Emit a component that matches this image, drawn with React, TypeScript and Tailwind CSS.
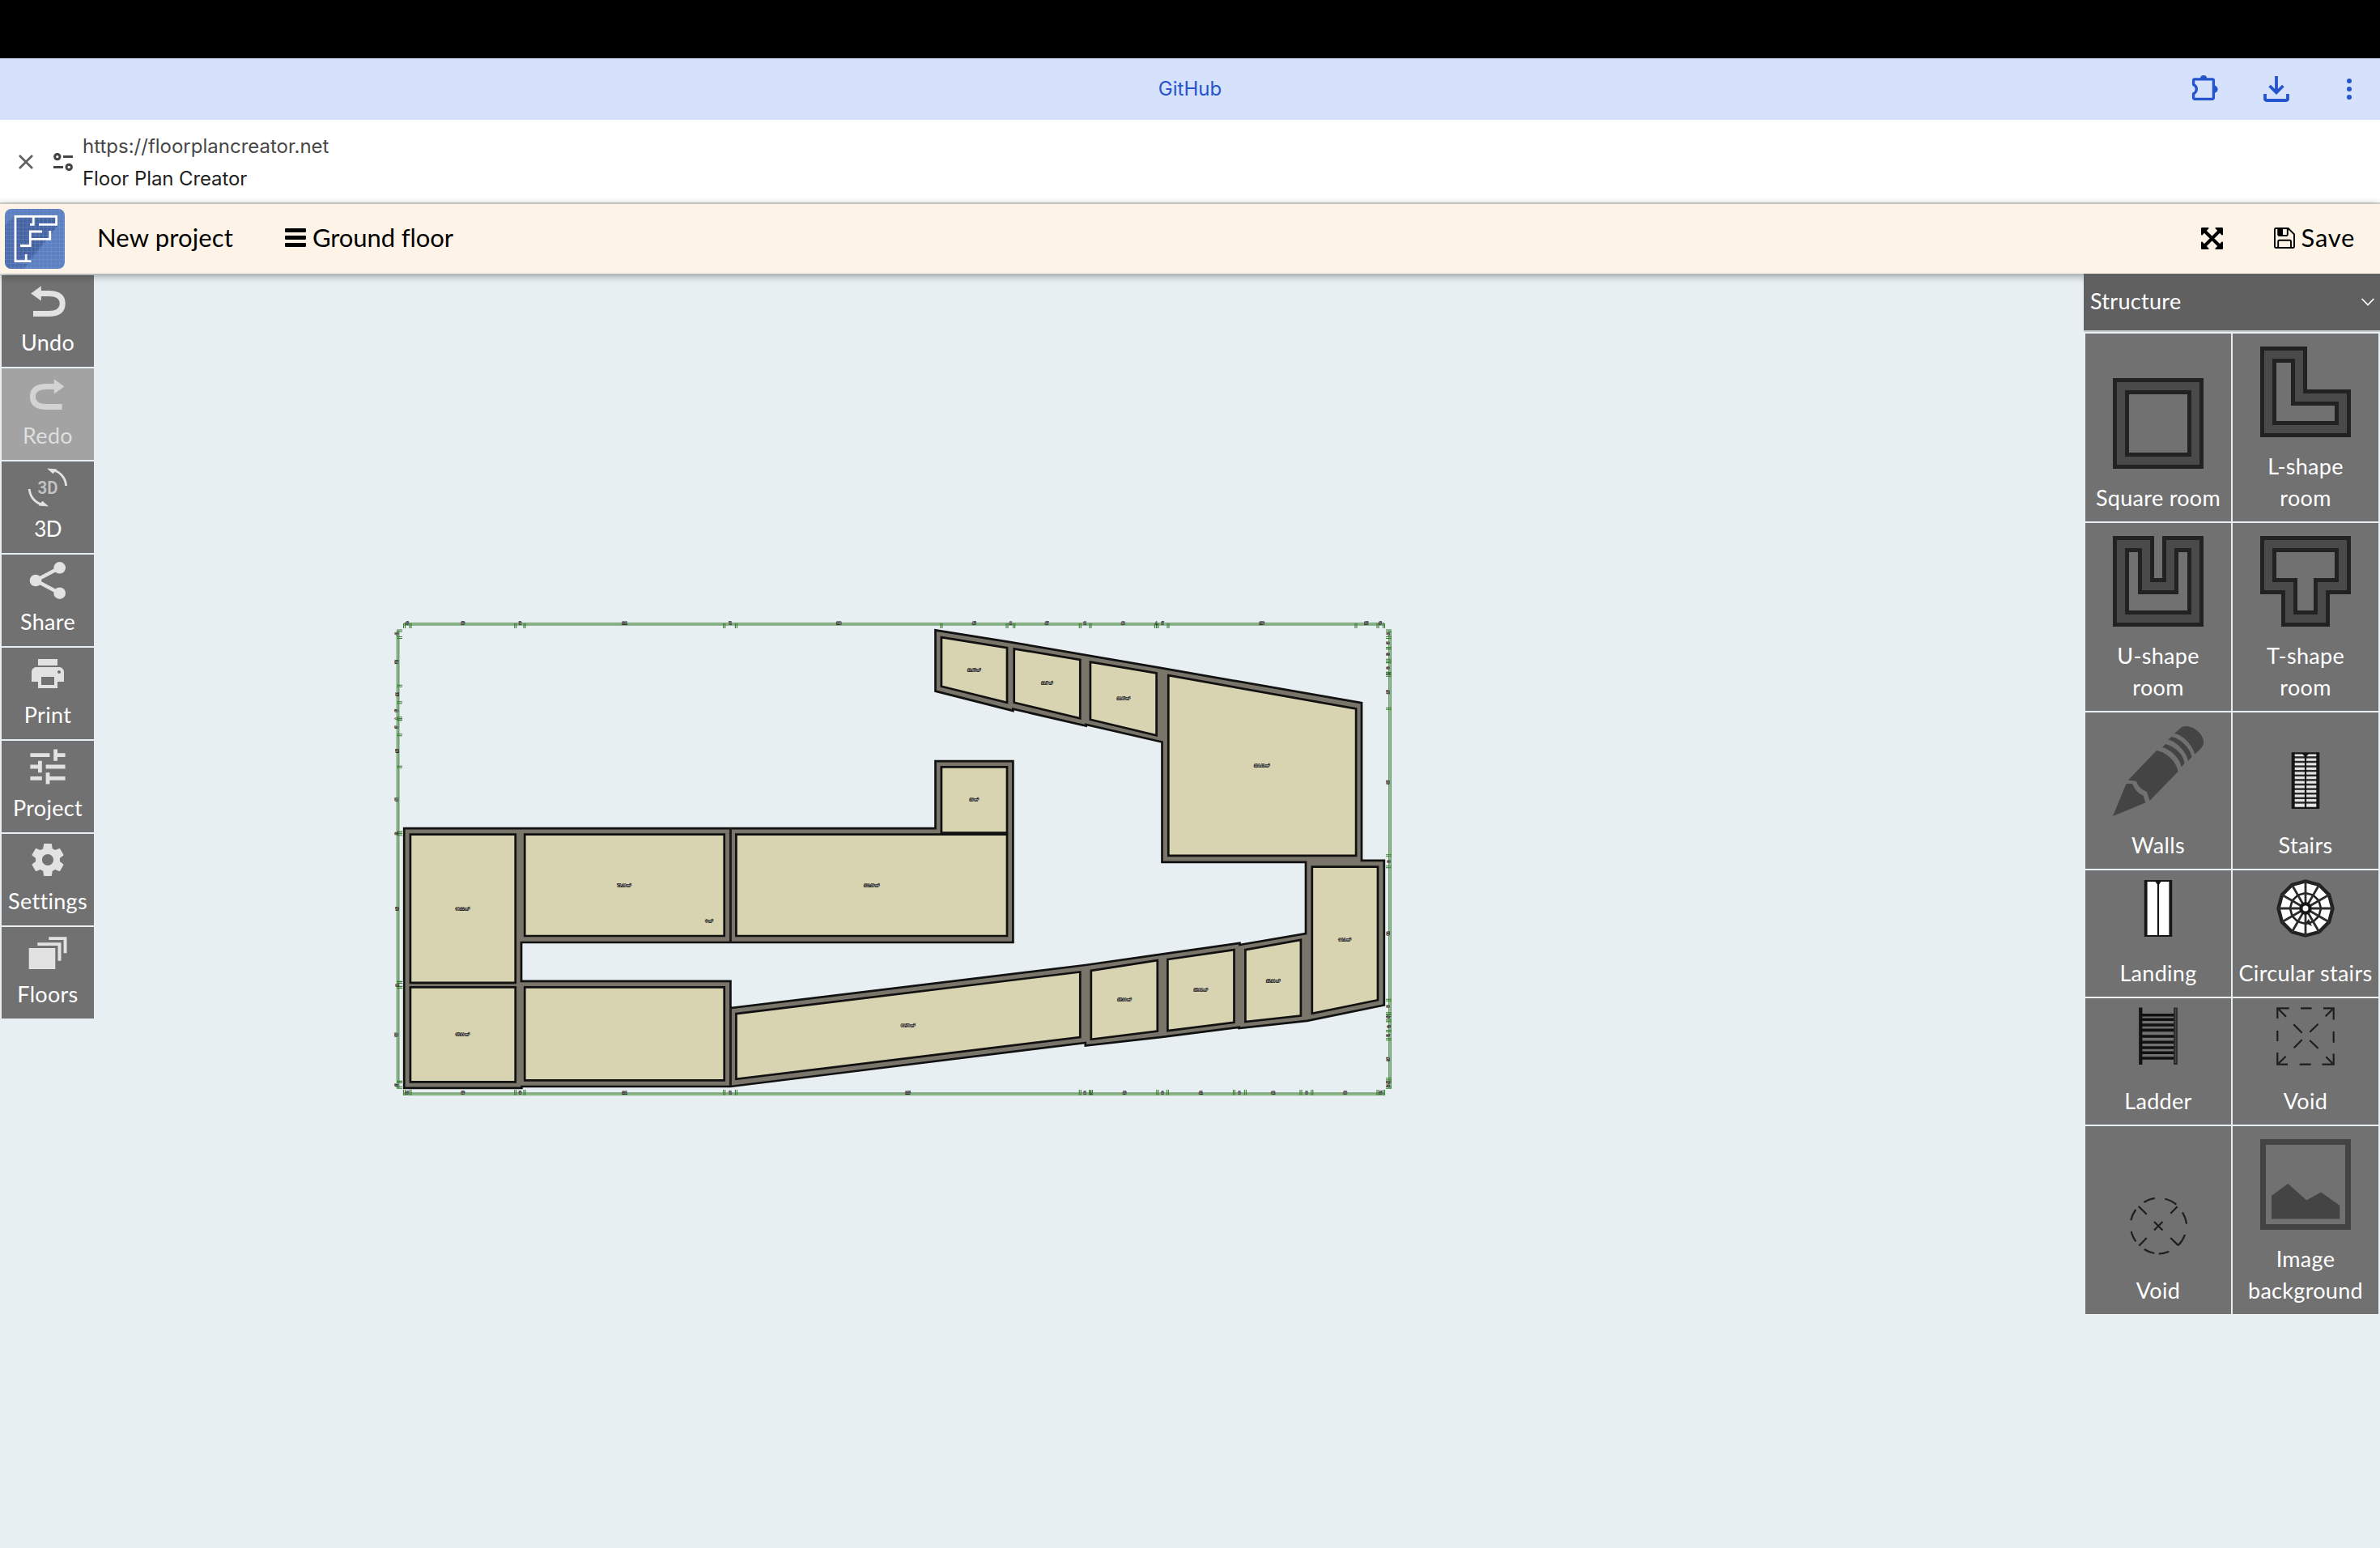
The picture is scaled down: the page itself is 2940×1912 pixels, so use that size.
import React from "react";

const OUTLINE =
  "M499.2 1023.2H1155.5V940.2H1251.4V1164H644V1211.8H902.4V1245L1340.8 1192L1434.7 1178.6L1531.4 1164.8V1167L1613 1153V1064.8H1435.5V916.5L1341.6 895V896.6L1251.4 875.7V877.9L1155.5 853.6V778.4L1245 792.6L1434.7 825.2L1682 868.2V1062.8H1709.8V1241.5L1614.7 1260.9L1530.6 1270V1268.8L1435.5 1280.8L1340.8 1291.6V1288L902.4 1342H644.5V1343.9H499.2Z";

const ROOMS: string[] = [
  "M506.9 1030.7H636.7V1213.8H506.9Z",
  "M506.9 1219.4H636.7V1336.4H506.9Z",
  "M648.2 1030.7H894.7V1156H648.2Z",
  "M648.2 1219.4H894.7V1334.4H648.2Z",
  "M909.4 1030.7H1244V1156H909.4Z",
  "M1162.9 947.3H1244V1028.8H1162.9Z",
  "M1162.9 787.2L1244 800.2V867.8L1162.9 847.7Z",
  "M1252.7 801.4L1334.3 814.8V887.2L1252.7 867.8Z",
  "M1346.9 817.6L1428.6 831.5V908.2L1346.9 888.8Z",
  "M1443.3 834.2L1675.1 875.3V1056.8H1443.3Z",
  "M1620.8 1070.7H1702V1235.2L1620.8 1251.8Z",
  "M909.4 1252.2L1334.3 1200.4V1281L909.4 1332.8Z",
  "M1347.8 1198.8L1429.8 1186.1V1273.5L1347.8 1283.8Z",
  "M1442.4 1185L1524.5 1173.1V1262.8L1442.4 1273.1Z",
  "M1538.4 1173.1L1606.9 1160.8V1254.5L1538.4 1262Z",
];

const AREAS: [number, number, string, number][] = [
  [571.4, 1122.5, "38.22 m²", 17],
  [571.4, 1277.5, "37.33 m²", 17],
  [771, 1093.2, "71.28 m²", 17],
  [876, 1137.5, "0 m²", 9],
  [1076.7, 1093.2, "102.16 m²", 19],
  [1121.6, 1266.4, "83.78 m²", 17],
  [1203.3, 827.5, "12.65 m²", 16],
  [1293.5, 843.7, "13.7 m²", 14],
  [1387.8, 862.3, "14.85 m²", 16],
  [1558.8, 945.3, "114.41 m²", 19],
  [1203.3, 987.2, "16 m²", 11],
  [1661.2, 1160.4, "34.1 m²", 15],
  [1389, 1234.4, "17.33 m²", 17],
  [1483.3, 1222.5, "17.81 m²", 17],
  [1572.7, 1211, "15.14 m²", 17],
];

const TOP_TICKS = [499.5, 507, 636.7, 648, 894.7, 909.4, 1162.9, 1244, 1252.7, 1334.3, 1347, 1427.4, 1430, 1443, 1675, 1702, 1709.5];
const TOP_LABELS: [number, string][] = [[502.9, "35"], [571.8, "650"], [642.4, "56"], [771.4, "1231"], [902, "74"], [1036.3, "1268"], [1203.3, "405"], [1248.2, "44"], [1293, "407"], [1340, "64"], [1387.3, "408"], [1428.6, "1"], [1436, "67"], [1558.8, "1160"], [1687.8, "135"], [1705, "35"]];
const BOTTOM_TICKS = [499.5, 507, 636.7, 648, 894.7, 909.4, 1334.3, 1346.5, 1348.5, 1429.8, 1442.4, 1524.5, 1538.4, 1607, 1620.8, 1702, 1709.5];
const BOTTOM_LABELS: [number, string][] = [[502.9, "35"], [571.8, "650"], [642.4, "56"], [771.4, "1231"], [902, "74"], [1121.6, "2125"], [1340, "64"], [1347.5, "1"], [1389, "410"], [1436, "63"], [1483.3, "411"], [1531, "69"], [1572.7, "342"], [1614, "69"], [1661.5, "406"], [1705.5, "35"]];
const LEFT_TICKS = [779, 787.5, 847.3, 867.8, 886.8, 888.6, 907.8, 947.3, 1028.4, 1030.8, 1213.4, 1219.4, 1336.4, 1343.2];
const LEFT_LABELS: [number, string][] = [[782.8, "44"], [817.6, "302"], [857.5, "101"], [877.7, "95"], [887.6, "8"], [898.3, "95"], [927.5, "197"], [987.6, "408"], [1029.6, "12"], [1122.5, "915"], [1217, "28"], [1277.9, "585"], [1340.3, "37"]];
const RIGHT_TICKS = [779, 787.5, 800.6, 815.2, 817.6, 831.4, 834.2, 875.3, 1056.8, 1070.7, 1235.2, 1251.8, 1254.5, 1260.9, 1273.5, 1283.8, 1332.8, 1336.4, 1343.2];
const RIGHT_LABELS: [number, string][] = [[782.8, "44"], [794.3, "65"], [808.1, "73"], [825.1, "69"], [832.2, "1"], [854.8, "205"], [966.3, "907"], [1064, "69"], [1152.9, "822"], [1243.1, "83"], [1256.1, "13"], [1268, "62"], [1278.7, "51"], [1308.3, "245"], [1336.8, "18"], [1341.1, "34"]];

function Tiny({ x, y, text, w, rotate }: { x: number; y: number; text: string; w: number; rotate?: boolean }) {
  return (
    <text
      x={x}
      y={y + 1.5}
      transform={rotate ? `rotate(-90 ${x} ${y})` : undefined}
      textAnchor="middle"
      textLength={w}
      lengthAdjust="spacingAndGlyphs"
      fontSize="4.3"
      fontFamily="Liberation Sans, sans-serif"
      fill="#fff"
      stroke="#111"
      strokeWidth="1.4"
      paintOrder="stroke"
    >
      {text}
    </text>
  );
}

function FloorPlan() {
  return (
    <svg className="absolute top-[412px] left-[480px]" width="1260" height="620" viewBox="480 750 1260 620">
      <path d="M499 770.8H1710M499 1351H1710M491.5 779V1344M1717 779V1344" fill="none" stroke="#c3dcbf" strokeWidth="2" />
      <g stroke="#3c7d34" strokeWidth="1.1" fill="none">
        <path d="M499 769.8H1710M499 772H1710M499 1350H1710M499 1352.3H1710M490.4 779V1344M492.8 779V1344M1715.8 779V1344M1718.2 779V1344" />
        {TOP_TICKS.map((x) => <path key={x} d={`M${x - 1} 770V776M${x + 1} 770V776`} />)}
        {BOTTOM_TICKS.map((x) => <path key={x} d={`M${x - 1} 1346V1353M${x + 1} 1346V1353`} />)}
        {LEFT_TICKS.map((y) => <path key={y} d={`M490 ${y - 1}H497M490 ${y + 1}H497`} />)}
        {RIGHT_TICKS.map((y) => <path key={y} d={`M1712 ${y - 1}H1719M1712 ${y + 1}H1719`} />)}
      </g>
      <path d={OUTLINE} fill="#7a756a" stroke="#111" strokeWidth="2.7" />
      <path d="M902.4 1023V1164M902.4 1245V1342" stroke="#1c1b19" strokeWidth="3" />
      {ROOMS.map((d) => <path key={d} d={d} fill="#d8d3b0" stroke="#111" strokeWidth="2.7" />)}
      <path d="M1162 1029.5H1244" stroke="#111" strokeWidth="4" />
      {AREAS.map(([x, y, t, w]) => <Tiny key={`${x}-${y}`} x={x} y={y} text={t} w={w} />)}
      {TOP_LABELS.map(([x, t]) => <Tiny key={x} x={x} y={769} text={t} w={t.length * 1.5} />)}
      {BOTTOM_LABELS.map(([x, t]) => <Tiny key={x} x={x} y={1349} text={t} w={t.length * 1.5} />)}
      {LEFT_LABELS.map(([y, t]) => <Tiny key={y} x={490} y={y} text={t} w={t.length * 1.5} rotate />)}
      {RIGHT_LABELS.map(([y, t]) => <Tiny key={y} x={1715} y={y} text={t} w={t.length * 1.5} rotate />)}
    </svg>
  );
}

/* ---------- left toolbar ---------- */

const UndoShape = (
  <>
    <path d="M48 22.4H58C70 22.4 75.2 27 75.2 34.8C75.2 43 70 47.5 58 47.5H39" fill="none" stroke="currentColor" strokeWidth="7" />
    <path d="M36.2 22.4L48.8 13.3V31.4Z" />
  </>
);

const SIDE: { label: string; icon: React.ReactNode; off?: boolean; tight?: boolean }[] = [
  { label: "Undo", icon: UndoShape },
  { label: "Redo", off: true, icon: <g transform="translate(113.6 0) scale(-1 1)">{UndoShape}</g> },
  {
    label: "3D",
    tight: true,
    icon: (
      <>
        <text x="57" y="39.6" textAnchor="middle" textLength="25" lengthAdjust="spacingAndGlyphs" fontSize="21.5" fontFamily="Roboto, sans-serif" fontWeight="600" fill="#c3c3c3">3D</text>
        <path d="M63 10.5C72 12.5 79 20 79.6 30M51 53.5C42 51.5 35 44 34.2 34" fill="none" stroke="currentColor" strokeWidth="2.8" />
        <path d="M56 8.4L68.5 9.5L63.5 15.2ZM58 55.6L45.5 54.5L50.5 48.8Z" />
      </>
    ),
  },
  {
    label: "Share",
    icon: (
      <>
        <path d="M71.7 16.3L42 32L71.7 47.7" fill="none" stroke="currentColor" strokeWidth="4.4" />
        <circle cx="42" cy="32" r="7.3" />
        <circle cx="71.7" cy="16.3" r="7.3" />
        <circle cx="71.7" cy="47.7" r="7.3" />
      </>
    ),
  },
  {
    label: "Print",
    icon: <path transform="translate(33 8) scale(2)" d="M19 8H5c-1.66 0-3 1.34-3 3v6h4v4h12v-4h4v-6c0-1.66-1.34-3-3-3zm-3 11H8v-5h8v5zm3-7c-.55 0-1-.45-1-1s.45-1 1-1 1 .45 1 1-.45 1-1 1zm-1-9H6v4h12V3z" />,
  },
  {
    label: "Project",
    icon: <path transform="translate(28.2 3.2) scale(2.4)" d="M3 17v2h6v-2H3zM3 5v2h10V5H3zm10 16v-2h8v-2h-8v-2h-2v6h2zM7 9v2H3v2h4v2h2V9H7zm14 4v-2H11v2h10zm-6-4h2V7h4V5h-4V3h-2v6z" />,
  },
  {
    label: "Settings",
    icon: <path transform="translate(33 8) scale(2)" d="M19.43 12.98c.04-.32.07-.64.07-.98s-.03-.66-.07-.98l2.11-1.65c.19-.15.24-.42.12-.64l-2-3.46c-.12-.22-.39-.3-.61-.22l-2.49 1c-.52-.4-1.08-.73-1.69-.98l-.38-2.65C14.46 2.18 14.25 2 14 2h-4c-.25 0-.46.18-.49.42l-.38 2.65c-.61.25-1.17.59-1.69.98l-2.49-1c-.23-.09-.49 0-.61.22l-2 3.46c-.13.22-.07.49.12.64l2.11 1.65c-.04.32-.07.65-.07.98s.03.66.07.98l-2.11 1.65c-.19.15-.24.42-.12.64l2 3.46c.12.22.39.3.61.22l2.49-1c.52.4 1.08.73 1.69.98l.38 2.65c.03.24.24.42.49.42h4c.25 0 .46-.18.49-.42l.38-2.65c.61-.25 1.17-.59 1.69-.98l2.49 1c.23.09.49 0 .61-.22l2-3.46c.12-.22.07-.49-.12-.64l-2.11-1.65zM12 15.5c-1.93 0-3.5-1.57-3.5-3.5s1.57-3.5 3.5-3.5 3.5 1.57 3.5 3.5-1.57 3.5-3.5 3.5z" />,
  },
  {
    label: "Floors",
    icon: <path d="M33.7 26H66.3V52H33.7ZM44.3 19.3H73.5V41.7H69.5V23H44.3ZM58.3 12.3H80.5V32.3H76.6V16H58.3Z" />,
  },
];

/* ---------- right palette ---------- */

function Wall({ d }: { d: string }) {
  return (
    <svg className="mb-4 size-28" viewBox="0 0 112 112" fill="none">
      <path d={d} stroke="#222" strokeWidth="20" />
      <path d={d} stroke="#4a4a4a" strokeWidth="10" />
    </svg>
  );
}

function Small({ children }: { children: React.ReactNode }) {
  return (
    <svg className="mb-6 size-[72px]" viewBox="0 0 72 72" fill="none" stroke="#1e1e1e" strokeWidth="2.2">
      {children}
    </svg>
  );
}

const treads = Array.from({ length: 11 }, (_, i) => 7.4 + i * 5.6);
const spokes = Array.from({ length: 12 }, (_, i) => (i * Math.PI) / 6);
const ring = (r: number) => spokes.map((a) => `${(36 + r * Math.sin(a)).toFixed(2)},${(36 + r * Math.cos(a)).toFixed(2)}`).join(" ");
const rungs = [9.7, 15.3, 22, 28.4, 36, 43.2, 50, 56.3, 63];

const PALETTE: { lines: string[]; h: string; icon: React.ReactNode }[] = [
  { lines: ["Square room"], h: "h-[232px]", icon: <Wall d="M10 10H102V102H10Z" /> },
  { lines: ["L-shape", "room"], h: "h-[232px]", icon: <Wall d="M10 10H48V63H102V102H10Z" /> },
  { lines: ["U-shape", "room"], h: "h-[232px]", icon: <Wall d="M10 10H41V62H71V10H102V102H10Z" /> },
  { lines: ["T-shape", "room"], h: "h-[232px]", icon: <Wall d="M10 10H102V62H76V102H36V62H10Z" /> },
  {
    lines: ["Walls"],
    h: "h-[193px]",
    icon: (
      <svg className="mb-4 size-28" viewBox="0 0 112 112" fill="#444">
        <path d="M0 112L16.5 72H24C27 79 31 84 37.5 86.5L40.3 95.5Z" />
        <path d="M19 67.5L54 31C66 33 79 45 80.5 57L45.5 93L42 82C35 79 31 75 29 69Z" />
        <path d="M61 27L65 23C77 26 88 37 88.5 47L84.5 51.5C84 43 73 30 61 27Z" />
        <path d="M68 17.5L73 14C85 17 96 29 97.5 39L93 44C92 35 80 20 68 17.5Z" />
        <path d="M76 10L85 2C97 -3 114 11 112 23C110 28 106 32 101 35.5C100 27 88 12 76 10Z" />
      </svg>
    ),
  },
  {
    lines: ["Stairs"],
    h: "h-[193px]",
    icon: (
      <Small>
        <rect x="20.5" y="2.5" width="31" height="67" fill="#e6e6e6" stroke="none" />
        {treads.map((y) => <path key={y} d={`M20 ${y}H52`} stroke="#2a2a2a" strokeWidth="2.5" />)}
        <path d="M20.7 1.5V70.5M51.3 1.5V70.5" stroke="#161616" strokeWidth="4" />
        <path d="M19 2.3H53M19 69.8H53M36 2V70" stroke="#161616" />
        <path d="M32 3H40L36 8Z" fill="#161616" stroke="none" />
      </Small>
    ),
  },
  {
    lines: ["Landing"],
    h: "h-[156px]",
    icon: (
      <Small>
        <rect x="20.5" y="2.5" width="31" height="67" fill="#fff" stroke="none" />
        <path d="M20.7 1V71M51.3 1V71" stroke="#161616" strokeWidth="3.8" />
        <path d="M19 2H53M19 70H53M36 2V70" stroke="#161616" />
        <path d="M32.5 3H39.5L36 8Z" fill="#161616" stroke="none" />
      </Small>
    ),
  },
  {
    lines: ["Circular stairs"],
    h: "h-[156px]",
    icon: (
      <Small>
        <polygon points={ring(33.5)} fill="#fff" stroke="#222" strokeWidth="4.4" />
        <polygon points={ring(19)} stroke="#222" strokeWidth="2.6" />
        {spokes.map((a) => <path key={a} d={`M36 36L${36 + 34 * Math.sin(a)} ${36 + 34 * Math.cos(a)}`} stroke="#2c2c2c" strokeWidth="2.8" />)}
        <path d="M36 54L44 58L40 49Z" fill="#222" stroke="none" />
        <circle cx="36" cy="36" r="5.6" fill="#fff" stroke="#161616" strokeWidth="4.2" />
      </Small>
    ),
  },
  {
    lines: ["Ladder"],
    h: "h-[156px]",
    icon: (
      <Small>
        {rungs.map((y) => <path key={y} d={`M16 ${y}H56`} stroke="#111" strokeWidth="3.6" />)}
        <path d="M14.3 .5V71" stroke="#111" strokeWidth="4.2" />
        <path d="M57.5 .5V71" stroke="#2b2b2b" strokeWidth="4.8" />
        <path d="M57.5 2V69" stroke="#444" strokeWidth="1.4" />
      </Small>
    ),
  },
  {
    lines: ["Void"],
    h: "h-[156px]",
    icon: (
      <Small>
        <path d="M.3 1.3H15.7M30 1.3H43.5M58 1.3H71.8M1.3 .3V14M1.3 29V42M1.3 56V71.7M70.7 .3V15.6M70.7 30V43.7M70.7 57.5V71.7M.3 70.7H14M28.7 70.7H42.7M56.5 70.7H71.8M1.3 1L12 11.7M70.7 1.3L60.7 11.3M1.3 70.7L11.7 60.7M70.7 70.7L61.3 61.3M21.3 21.3L31.7 31.7M51.7 20.7L41.3 30.7M21.7 50.3L31.7 40.3M51.7 51L41.3 41" />
      </Small>
    ),
  },
  {
    lines: ["Void"],
    h: "h-[232px]",
    icon: (
      <Small>
        <path d="M18.3 7A34.7 34.7 0 0 1 31.7 1.8M44.3 2.7A34.7 34.7 0 0 1 58.3 9.7M66 19.3A34.7 34.7 0 0 1 71 33.7M69 47A34.7 34.7 0 0 1 61 60M49.3 67.8A34.7 34.7 0 0 1 36.7 70.7M31.3 70A34.7 34.7 0 0 1 18.7 65M8.3 55.3A34.7 34.7 0 0 1 2.7 43M2.3 29.3A34.7 34.7 0 0 1 8.3 16M11.7 12L21.7 21.7M59.7 12.3L51.3 20.7M12.3 60.7L21.7 51M51.3 51L61 60.4M31 31L41.5 41.5M41.5 31L31 41.5" />
      </Small>
    ),
  },
  {
    lines: ["Image", "background"],
    h: "h-[232px]",
    icon: (
      <svg className="mb-4 size-28" viewBox="0 0 112 112" fill="#444">
        <path d="M0 0H112V112H0ZM7 7V105H105V7Z" fillRule="evenodd" />
        <path d="M14 70L34.3 55L57.3 75.5L75 65.5L98.3 82V98.4H14Z" />
      </svg>
    ),
  },
];

function Logo() {
  const grid = Array.from({ length: 15 }, (_, i) => 2.5 + i * 5);
  return (
    <svg className="ml-1.5 block size-[74px] overflow-hidden rounded-[8px]" viewBox="0 0 74 74">
      <rect width="74" height="74" fill="#5d80c0" />
      <path d="M0 20L12 9H65V21L24 74H0Z" fill="#4d6dad" />
      <path d="M12 9H65V21L30 61H12Z" fill="#4563a0" />
      <path d={grid.map((g) => `M${g} 0V74M0 ${g}H74`).join("")} stroke="#7f9ed6" strokeOpacity=".28" strokeWidth="1" />
      <path d="M32.4 64.6H13V9.3H63.6V19.3H42M35.3 9.3V19.3H31M19 45.5H31.3V28H46M31.3 37.3H55.7V27M26.2 56V64.6" fill="none" stroke="#fff" strokeWidth="2.8" />
    </svg>
  );
}

export default function App() {
  return (
    <div className="flex h-[1912px] w-[2940px] flex-col overflow-hidden bg-[#e7eff3] font-['Lato','Noto_Sans',sans-serif] text-black">
      <div className="h-[72px] shrink-0 bg-black" />

      <div className="grid h-[76px] shrink-0 grid-cols-[1fr_auto_1fr] items-center bg-[#d6e1fb] font-['Inter',sans-serif] text-[24px] leading-none text-[#2555cc]">
        <span />
        <span>GitHub</span>
        <div className="flex items-center justify-end pr-[35px]">
          <svg className="mr-[52px] mb-1 h-10 w-10" viewBox="0 0 40 40" fill="none" stroke="currentColor" strokeWidth="3.3">
            <path d="M5.6 16.4V11.4a1.6 1.6 0 0 1 1.6-1.6H28.8a1.6 1.6 0 0 1 1.6 1.6V32.8a1.6 1.6 0 0 1-1.6 1.6H7.2a1.6 1.6 0 0 1-1.6-1.6V27.8A6.2 6.2 0 0 0 5.6 16.4Z" strokeLinejoin="round" />
            <path d="M14 9a4.1 4.1 0 0 1 8.2 0ZM31 17.6a4.6 4.6 0 0 1 0 9.2Z" fill="currentColor" stroke="none" />
          </svg>
          <svg className="mr-[71px] size-8" viewBox="0 0 32 32" fill="none" stroke="currentColor" strokeWidth="3.8">
            <path d="M16 0V21M7.6 12L16 20.4L24.4 12M2 22V28.2A1.8 1.8 0 0 0 3.8 30H28.2A1.8 1.8 0 0 0 30 28.2V22" />
          </svg>
          <svg className="h-7 w-1.5" viewBox="0 0 6 28" fill="currentColor">
            <circle cx="3" cy="4" r="3" />
            <circle cx="3" cy="14" r="3" />
            <circle cx="3" cy="24" r="3" />
          </svg>
        </div>
      </div>

      <div className="flex h-[104px] shrink-0 items-center border-b-2 border-[#dcdcdc] bg-white pt-0.5 font-['Inter',sans-serif] text-[24px]">
        <svg className="ml-[23px] size-[18px]" viewBox="0 0 18 18" fill="none" stroke="#5f5f5f" strokeWidth="2.6">
          <path d="M1 1L17 17M17 1L1 17" />
        </svg>
        <svg className="ml-[25px] h-[22px] w-6" viewBox="0 0 24 22" fill="none" stroke="#444" strokeWidth="3">
          <circle cx="4.8" cy="4.6" r="3.2" />
          <path d="M12 4.6H24M0 17.4H12" />
          <circle cx="19.2" cy="17.4" r="3.2" />
        </svg>
        <div className="ml-3 flex flex-col pt-0.5 leading-10">
          <span className="text-[#474747]">https://floorplancreator.net</span>
          <span className="tracking-[-0.1px] text-[#1f1f1f]">Floor Plan Creator</span>
        </div>
      </div>

      <header className="relative z-10 flex h-[86px] shrink-0 items-center bg-[#fdf4e7] text-[31px] shadow-[0_2px_10px_rgba(0,0,0,0.4)]">
        <Logo />
        <span className="ml-10 w-[232px] pb-[3px] tracking-[0.15px] whitespace-nowrap">New project</span>
        <svg className="mb-0.5 h-[26px] w-[26px]" viewBox="0 0 26 26" fill="#000">
          <rect y="1" width="26" height="5" rx="1.2" />
          <rect y="10" width="26" height="5" rx="1.2" />
          <rect y="19" width="26" height="5" rx="1.2" />
        </svg>
        <span className="ml-2 pb-[3px] tracking-[-0.1px] whitespace-nowrap">Ground floor</span>
        <svg className="mb-0.5 ml-auto size-[27px]" viewBox="0 0 27 27" fill="#000">
          <path d="M5 5L22 22M22 5L5 22" stroke="#000" strokeWidth="4" />
          <path d="M0 1.2A1.2 1.2 0 0 1 1.2 0H8.6C9.6 0 9.9 1 9.2 1.6L1.6 9.2C1 9.9 0 9.6 0 8.6ZM27 1.2A1.2 1.2 0 0 0 25.8 0H18.4C17.4 0 17.1 1 17.8 1.6L25.4 9.2C26 9.9 27 9.6 27 8.6ZM0 25.8A1.2 1.2 0 0 0 1.2 27H8.6C9.6 27 9.9 26 9.2 25.4L1.6 17.8C1 17.1 0 17.4 0 18.4ZM27 25.8A1.2 1.2 0 0 1 25.8 27H18.4C17.4 27 17.1 26 17.8 25.4L25.4 17.8C26 17.1 27 17.4 27 18.4Z" />
        </svg>
        <svg className="mb-0.5 ml-[63px] size-[26px]" viewBox="0 0 26 26" fill="none" stroke="#000" strokeWidth="1.9">
          <path d="M2.2 1H17.6L25 8.4V23.8A1.2 1.2 0 0 1 23.8 25H2.2A1.2 1.2 0 0 1 1 23.8V2.2A1.2 1.2 0 0 1 2.2 1ZM5.2 25V17A1.2 1.2 0 0 1 6.4 15.8H19.8A1.2 1.2 0 0 1 21 17V25M5.2 1V8.8A1.2 1.2 0 0 0 6.4 10H15.6A1.2 1.2 0 0 0 16.8 8.8V1" />
          <rect x="5" y="1" width="6" height="9" fill="#000" stroke="none" />
        </svg>
        <span className="mr-[31px] ml-2 pb-[3px] tracking-[0.7px] whitespace-nowrap">Save</span>
      </header>

      <main className="relative flex flex-1 items-start justify-between">
        <FloorPlan />
        <nav className="mt-0.5 ml-0.5 flex w-[114px] flex-col gap-0.5">
          {SIDE.map((s) => (
            <button
              key={s.label}
              className={
                s.off
                  ? "flex h-[113px] flex-col items-center bg-[#a3a3a3] text-[#d3d3d3]"
                  : "flex h-[113px] flex-col items-center bg-[#717171] text-[#e2e2e2]"
              }
            >
              <svg className="block h-16 w-[114px] shrink-0" viewBox="0 0 114 64" fill="currentColor">
                {s.icon}
              </svg>
              <span
                className={
                  s.off
                    ? "text-[27px] leading-[38px] tracking-[0.3px] whitespace-nowrap text-[#dedede]"
                    : s.tight
                      ? "text-[26px] leading-[38px] tracking-[-0.8px] whitespace-nowrap text-white"
                      : "text-[27px] leading-[38px] tracking-[0.3px] whitespace-nowrap text-white"
                }
              >
                {s.label}
              </span>
            </button>
          ))}
        </nav>

        <aside className="relative z-20 w-[366px]">
          <div className="flex h-[72px] items-center justify-between border-b-2 border-[#c9cccd] bg-[#606060] pr-[7px] pl-2 text-[27px] tracking-[0.3px] text-white">
            <span className="pb-0.5">Structure</span>
            <svg className="h-[10px] w-4" viewBox="0 0 16 10" fill="none" stroke="#fff" strokeWidth="1.7">
              <path d="M.6 1L8 8.6L15.4 1" />
            </svg>
          </div>
          <div className="mt-0.5 grid grid-cols-2 gap-0.5 px-0.5">
            {PALETTE.map((p, i) => (
              <div key={i} className={`flex flex-col items-center justify-end bg-[#717171] pb-2.5 ${p.h}`}>
                {p.icon}
                {p.lines.map((l) => (
                  <span key={l} className="text-[27px] leading-[39px] tracking-[0.3px] whitespace-nowrap text-white">{l}</span>
                ))}
              </div>
            ))}
          </div>
        </aside>
      </main>
    </div>
  );
}
